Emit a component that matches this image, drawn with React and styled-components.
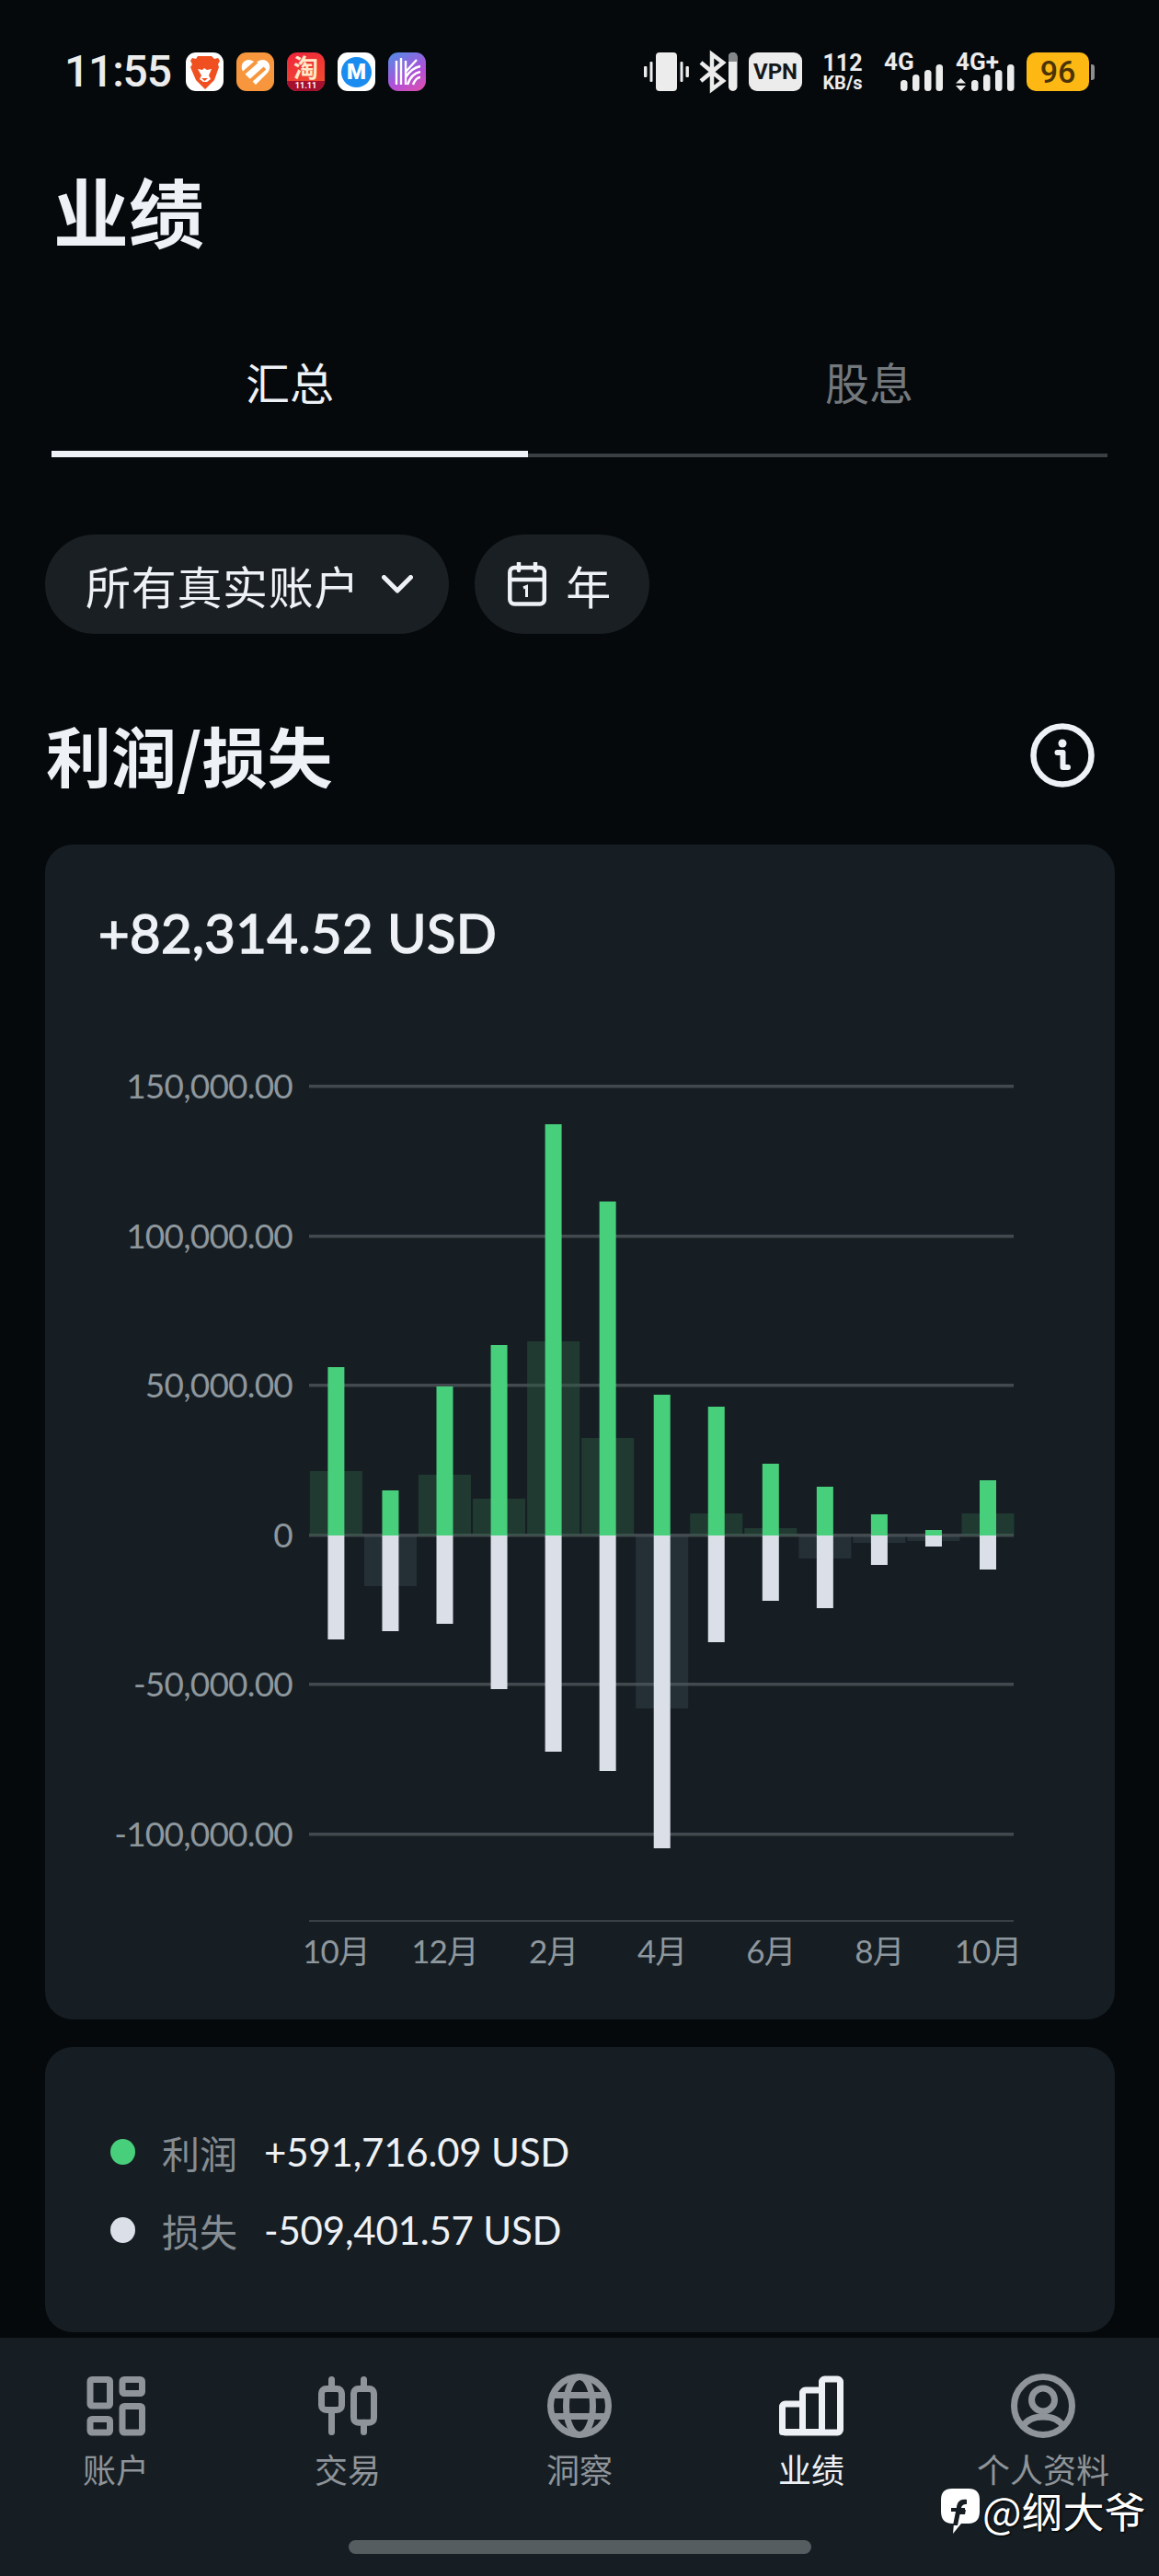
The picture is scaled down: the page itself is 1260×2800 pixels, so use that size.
import React from "react";
import styled, { createGlobalStyle } from "styled-components";

const GlobalStyle = createGlobalStyle`
  html, body {
    margin: 0;
    padding: 0;
    background: #05090c;
  }
  body {
    font-family: Lato, "Noto Sans CJK SC", sans-serif;
  }
  * {
    box-sizing: border-box;
  }
`;

const cjk = `"Noto Sans CJK SC", sans-serif`;

const Page = styled.div`
  position: relative;
  width: 1260px;
  height: 2800px;
  background: #05090c;
  color: #eef1f5;
  display: flex;
  flex-direction: column;
  overflow: hidden;
`;

/* status bar */
const StatusBar = styled.div`
  display: flex;
  justify-content: space-between;
  align-items: center;
  height: 42px;
  margin-top: 57px;
  padding: 0 70px 0 70px;
  color: #ececec;
`;
const StatusLeft = styled.div`
  display: flex;
  align-items: center;
`;
const Clock = styled.div`
  font-family: Roboto, sans-serif;
  font-size: 48px;
  font-weight: 500;
  line-height: 42px;
  width: 132px;
  letter-spacing: -1.2px;
`;
const AppIcons = styled.div`
  display: flex;
  gap: 14px;
`;
const AppIcon = styled.div`
  width: 41px;
  height: 42px;
  border-radius: 11px;
  background: ${(p) => p.$bg || "#fff"};
  display: flex;
  flex-direction: column;
  align-items: center;
  justify-content: center;
  svg {
    display: block;
  }
`;
const TaoGlyph = styled.span`
  font-family: ${cjk};
  font-size: 27px;
  font-weight: 700;
  line-height: 31px;
  color: #ffe9c9;
`;
const TaoStrip = styled.span`
  width: 100%;
  height: 11px;
  border-radius: 0 0 11px 11px;
  background: #a5102f;
  color: #fff;
  font-family: Roboto, sans-serif;
  font-size: 9px;
  font-weight: 700;
  line-height: 11px;
  text-align: center;
`;
const MarkM = styled.span`
  width: 33px;
  height: 33px;
  border-radius: 50%;
  background: #1a8cf0;
  color: #fff;
  font-family: Roboto, sans-serif;
  font-size: 24px;
  font-weight: 900;
  line-height: 33px;
  text-align: center;
`;
const StatusRight = styled.div`
  display: flex;
  align-items: center;
  svg {
    display: block;
    overflow: visible;
  }
`;
const Vpn = styled.div`
  width: 58px;
  height: 42px;
  margin: 0 19px 0 12px;
  border-radius: 9px;
  background: #ececec;
  color: #15181a;
  font-family: Roboto, sans-serif;
  font-size: 24px;
  font-weight: 700;
  line-height: 42px;
  text-align: center;
`;
const Speed = styled.div`
  width: 50px;
  margin-right: 20px;
  font-family: Roboto, sans-serif;
  font-weight: 700;
  text-align: center;
  white-space: nowrap;
  span {
    display: block;
    font-size: 25px;
    line-height: 24px;
  }
  small {
    display: block;
    font-size: 20px;
    line-height: 18px;
  }
`;
const SignalText = styled.text`
  font-family: Roboto, sans-serif;
  font-size: 26px;
  font-weight: 700;
  fill: #ececec;
`;
const Battery = styled.div`
  display: flex;
  align-items: center;
  gap: 2px;
  margin-left: 13px;
`;
const BatteryBody = styled.div`
  width: 68px;
  height: 42px;
  border-radius: 10px;
  background: #fdb813;
  color: #4a3305;
  font-family: Roboto, sans-serif;
  font-size: 34px;
  font-weight: 500;
  line-height: 42px;
  text-align: center;
`;
const BatteryTip = styled.div`
  width: 4px;
  height: 17px;
  border-radius: 0 3px 3px 0;
  background: #8d8d8d;
`;

/* header */
const Title = styled.h1`
  margin: 79px 0 0 58px;
  font-family: ${cjk};
  font-size: 82px;
  font-weight: 700;
  line-height: 100px;
  color: #eef1f5;
`;
const TabLabels = styled.div`
  display: grid;
  grid-template-columns: 1fr 1fr;
  margin-top: 106px;
`;
const TabLabel = styled.div`
  font-family: ${cjk};
  font-size: 48px;
  line-height: 60px;
  text-align: center;
  color: ${(p) => (p.$active ? "#eef1f5" : "#73787c")};
`;
const TabTrack = styled.div`
  display: flex;
  align-items: flex-end;
  margin: 46px 56px 0;
  height: 7px;
`;
const TabActiveBar = styled.div`
  width: 518px;
  height: 7px;
  background: #eef1f5;
`;
const TabRestBar = styled.div`
  flex: 1;
  height: 4px;
  background: #3a3f43;
`;
const Filters = styled.div`
  display: flex;
  gap: 28px;
  margin: 84px 0 0 49px;
`;
const Pill = styled.div`
  display: flex;
  align-items: center;
  height: 108px;
  padding: 0 ${(p) => p.$right}px 0 ${(p) => p.$left}px;
  gap: ${(p) => p.$gap}px;
  border-radius: 54px;
  background: #1a1f23;
  font-family: ${cjk};
  font-size: 49px;
  color: #eef1f5;
  letter-spacing: 0.7px;
`;
const SectionHead = styled.div`
  display: flex;
  justify-content: space-between;
  align-items: center;
  margin: 87px 70px 0 50px;
  height: 90px;
`;
const SectionTitle = styled.h2`
  margin: -5px 0 0;
  font-family: ${cjk};
  font-size: 71px;
  font-weight: 700;
  line-height: 90px;
  color: #eef1f5;
`;

/* cards */
const ChartCard = styled.div`
  margin: 52px 48px 0 49px;
  height: 1277px;
  padding-top: 61px;
  border-radius: 30px;
  background: #161e23;
`;
const Total = styled.div`
  margin-left: 58px;
  font-size: 58px;
  font-weight: 400;
  line-height: 70px;
  letter-spacing: 0.3px;
  -webkit-text-stroke: 1.5px #eef1f5;
  color: #eef1f5;
`;
const ChartSvg = styled.svg`
  display: block;
  margin-top: 101px;
`;
const AxisText = styled.text`
  font-family: Lato, "Noto Sans CJK SC", sans-serif;
  font-size: ${(p) => p.$size}px;
  letter-spacing: ${(p) => p.$track}px;
  fill: #8e979d;
  text-anchor: ${(p) => p.$anchor};
`;
const LegendCard = styled.div`
  display: flex;
  flex-direction: column;
  gap: 37px;
  margin: 30px 48px 0 49px;
  height: 310px;
  padding: 90px 0 0 71px;
  border-radius: 30px;
  background: #161e23;
`;
const LegendRow = styled.div`
  display: flex;
  align-items: center;
  height: 48px;
`;
const LegendDot = styled.span`
  width: 27px;
  height: 28px;
  border-radius: 50%;
  background: ${(p) => p.$color};
`;
const LegendLabel = styled.span`
  margin: 0 29px 0 29px;
  font-family: ${cjk};
  font-size: 41px;
  color: #868d92;
`;
const LegendValue = styled.span`
  font-size: 42px;
  line-height: 48px;
  letter-spacing: -0.2px;
  color: #eef1f5;
`;

/* bottom nav */
const NavBar = styled.div`
  position: relative;
  display: flex;
  flex-direction: column;
  align-items: center;
  margin-top: auto;
  height: 259px;
  padding-top: 39px;
  background: #161e23;
`;
const NavItems = styled.div`
  display: grid;
  grid-template-columns: repeat(5, 252px);
`;
const NavItem = styled.div`
  display: flex;
  flex-direction: column;
  align-items: center;
  gap: 13px;
  color: ${(p) => (p.$active ? "#edf0f4" : "#8e9499")};
  svg {
    display: block;
  }
`;
const NavLabel = styled.span`
  font-family: ${cjk};
  font-size: 36px;
  line-height: 40px;
  white-space: nowrap;
`;
const HomeIndicator = styled.div`
  width: 503px;
  height: 15px;
  margin-top: 58px;
  border-radius: 8px;
  background: #565d61;
`;
const Watermark = styled.div`
  position: absolute;
  left: 1023px;
  top: 160px;
  display: flex;
  align-items: center;
  gap: 3px;
  font-family: ${cjk};
  font-size: 45px;
  line-height: 56px;
  color: #fff;
  white-space: nowrap;
  text-shadow: 0 0 2px #000, 1px 1px 2px #000;
`;

/* chart data: heights in px above and below the zero line */
const SCALE_TOP = 31;
const STEP = 162.6;
const ZERO = 519;
const gridValues = ["150,000.00", "100,000.00", "50,000.00", "0", "-50,000.00", "-100,000.00"];
const months = ["10月", "12月", "2月", "4月", "6月", "8月", "10月"];
const bars = [
  { up: 183, down: 113, net: 70 },
  { up: 49, down: 104, net: -55 },
  { up: 162, down: 96, net: 66 },
  { up: 207, down: 167, net: 40 },
  { up: 447, down: 235, net: 211 },
  { up: 363, down: 256, net: 106 },
  { up: 153, down: 340, net: -188 },
  { up: 140, down: 116, net: 24 },
  { up: 78, down: 71, net: 8 },
  { up: 53, down: 79, net: -25 },
  { up: 23, down: 32, net: -8 },
  { up: 6, down: 12, net: -6 },
  { up: 60, down: 37, net: 24 },
];
const barX = (i) => 316.4 + i * 59.05;
const gridY = (i) => Math.round(SCALE_TOP + i * STEP);

const Chart = () => (
  <ChartSvg width="1163" height="1000" viewBox="0 0 1163 1000">
    {gridValues.map((label, i) => (
      <g key={label}>
        <rect x="287" y={gridY(i) - 2} width="766" height="3.500" fill="#434a4f" />
        <AxisText $anchor="end" $size={37} $track={-0.8} x="269" y={gridY(i) + 13}>
          {label}
        </AxisText>
      </g>
    ))}
    <rect x="287" y="937" width="766" height="2" fill="#383f45" />
    {bars.map((b, i) =>
      b.net > 0 ? (
        <rect key={i} x={barX(i) - 28.5} y={ZERO - b.net} width="57" height={b.net} fill="#2f5f46" opacity="0.42" />
      ) : (
        <rect key={i} x={barX(i) - 28.5} y={ZERO} width="57" height={-b.net} fill="#4a5a62" opacity="0.3" />
      )
    )}
    {bars.map((b, i) => (
      <g key={i}>
        <rect x={barX(i) - 9} y={ZERO - b.up} width="18" height={b.up} fill="#48cf7c" />
        <rect x={barX(i) - 9} y={ZERO} width="18" height={b.down} fill="#dbdfe8" />
      </g>
    ))}
    {months.map((m, i) => (
      <AxisText key={i} $anchor="middle" $size={35} $track={-1} x={barX(i * 2)} y="984">
        {m}
      </AxisText>
    ))}
  </ChartSvg>
);

/* icons */
const BraveIcon = () => (
  <svg width="33" height="37" viewBox="0 0 33 37">
    <path d="M9 1h15l3 3 4-1 2 3-2 4 1 3-5 14-10 10L7 27 1 13l2-3-2-4 2-3 4 1z" fill="#f0501f" />
    <path d="M9 15l5 1 2-2 3 2 5-1-3 7 2 4-4 3h-4l-4-3 2-4z" fill="#fff" />
    <path d="M13 25h7l-3.500 3z" fill="#f0501f" />
  </svg>
);
const HeartIcon = () => (
  <svg width="32" height="29" viewBox="0 0 32 29">
    <path d="M16 28L3 15C-2 9 2 1 8 1c3 0 6 1 8 4 2-3 5-4 8-4 6 0 10 8 5 14z" fill="#fff" />
    <path d="M1 17L17 3M8 26L26 10" stroke="#f7963c" strokeWidth="4" />
  </svg>
);
const LinesIcon = () => (
  <svg width="41" height="42" viewBox="0 0 41 42">
    <g fill="none" stroke="#fff" strokeWidth="2.400">
      <path d="M9 9v26M14 6v29M19 9v26" />
      <path d="M19 21L31 8M19 27C24 19 30 16 35 15M21 35c3-9 9-13 14-14M27 35c2-5 5-8 8-8" />
    </g>
  </svg>
);
const VibrateIcon = () => (
  <svg width="49" height="42" viewBox="0 0 49 42" fill="currentColor">
    <rect x="13" width="23" height="42" rx="4" />
    <rect x="0" y="15" width="3.400" height="12" rx="1" />
    <rect x="6.500" y="10" width="3" height="22" rx="1" />
    <rect x="39.500" y="10" width="3" height="22" rx="1" />
    <rect x="45.500" y="15" width="3.400" height="12" rx="1" />
  </svg>
);
const BluetoothIcon = () => (
  <svg width="42" height="42" viewBox="0 0 42 42" style={{ marginLeft: 11 }}>
    <path d="M2 11l24 20-12 9V2l12 9L2 31" fill="none" stroke="#ececec" strokeWidth="4.500" />
    <rect x="32" width="9.500" height="42" rx="4.700" fill="#ececec" />
    <path d="M32 10V4.700a4.700 4.700 0 0 1 9.500 0V10z" fill="#85888a" />
  </svg>
);
const signalBar = (x, h) => <rect key={x} x={x} y={42 - h} width="7.500" height={h} rx="3.500" fill="#ececec" />;
const Signal4G = () => (
  <svg width="64" height="42" viewBox="0 0 64 42" style={{ marginRight: 14 }}>
    <SignalText x="0" y="19">4G</SignalText>
    {[[18, 12], [31, 18], [44, 23], [56.500, 29]].map(([x, h]) => signalBar(x, h))}
  </svg>
);
const Signal4GPlus = () => (
  <svg width="64" height="42" viewBox="0 0 64 42">
    <SignalText x="0" y="19">4G+</SignalText>
    <path d="M0 33.500L5.500 28l5.500 5.500zM0 36l5.500 6 5.500-6z" fill="#ececec" />
    {[[17, 12], [30, 18], [43, 23], [56, 29]].map(([x, h]) => signalBar(x, h))}
  </svg>
);
const ChevronIcon = () => (
  <svg width="34" height="20" viewBox="0 0 34 20">
    <path d="M2.500 2.500L17 17 31.500 2.500" fill="none" stroke="#eef1f5" strokeWidth="5" strokeLinecap="round" strokeLinejoin="round" />
  </svg>
);
const CalendarIcon = () => (
  <svg width="42" height="48" viewBox="0 0 42 48" fill="none" stroke="#eef1f5" strokeWidth="4.500">
    <rect x="2.300" y="6" width="37.500" height="39.500" rx="5" />
    <path d="M2.300 19h37.500M12 1v8M30 1v8" strokeLinecap="round" />
    <path d="M17 28l3.500-1.500V38" strokeWidth="3" />
  </svg>
);
const InfoIcon = () => (
  <svg width="70" height="70" viewBox="0 0 70 70">
    <circle cx="35" cy="35" r="31.500" fill="none" stroke="#eef1f5" strokeWidth="6.500" />
    <circle cx="35" cy="22" r="4.500" fill="#eef1f5" />
    <path d="M29.500 32H35.500V48H41" fill="none" stroke="#eef1f5" strokeWidth="6" strokeLinejoin="round" strokeLinecap="round" />
  </svg>
);
const NavIconSvg = styled.svg`
  width: 70px;
  height: 70px;
  fill: none;
  stroke: currentColor;
  stroke-width: 7px;
`;
const AccountsIcon = () => (
  <NavIconSvg viewBox="0 0 70 70">
    <rect x="7" y="6.500" width="21.500" height="28.500" rx="2" />
    <rect x="42" y="6.500" width="21.500" height="15" rx="2" />
    <rect x="7" y="49.500" width="21.500" height="14.500" rx="2" />
    <rect x="42" y="35.500" width="21.500" height="28.500" rx="2" />
  </NavIconSvg>
);
const TradeIcon = () => (
  <NavIconSvg viewBox="0 0 70 70" strokeLinecap="round">
    <rect x="6.500" y="16.500" width="22" height="23" rx="5" />
    <rect x="41.500" y="16.500" width="22" height="36.700" rx="5" />
    <path d="M17.500 6.500V16.500M17.500 39.500V63.500M52.500 6.500V16.500M52.500 53.200V63.500" />
  </NavIconSvg>
);
const GlobeIcon = () => (
  <NavIconSvg viewBox="0 0 70 70">
    <circle cx="35" cy="35" r="31.500" />
    <ellipse cx="35" cy="35" rx="14.500" ry="31.500" />
    <path d="M6 23.500H64M6 46.500H64" />
  </NavIconSvg>
);
const ChartIcon = () => (
  <NavIconSvg viewBox="0 0 70 70" strokeLinejoin="round">
    <path d="M3.500 63.500V36a3 3 0 0 1 3-3h19V63.500zM25.500 63.500V21a3 3 0 0 1 3-3h18V63.500z" />
    <path d="M46.500 63.500V9a3 3 0 0 1 3-3h14a3 3 0 0 1 3 3V61a3 3 0 0 1-3 3H6.500a3 3 0 0 1-3-3" />
  </NavIconSvg>
);
const ProfileIcon = () => (
  <NavIconSvg viewBox="0 0 70 70">
    <circle cx="35" cy="35" r="31.500" />
    <circle cx="35" cy="28.500" r="12.500" />
    <path d="M13 58c4-8 12-11 22-11s18 3 22 11" />
  </NavIconSvg>
);
const FacebookMark = () => (
  <svg width="42" height="49" viewBox="0 0 42 49">
    <path d="M12 0h18c8 0 12 4 12 12v13c0 8-4 13-12 13h-8l-9 11 1-11h-2C4 38 0 33 0 25V12C0 4 4 0 12 0z" fill="#fff" />
    <path d="M13 40l4-20c1-6 4-9 11-8v5c-4 0-5 1-6 4l-.500 2H27l-1 5h-5.500l-2.500 12z" fill="#161e23" />
    <path d="M11 21h15v4H11z" fill="#161e23" />
  </svg>
);

const navItems = [
  { label: "账户", Icon: AccountsIcon },
  { label: "交易", Icon: TradeIcon },
  { label: "洞察", Icon: GlobeIcon },
  { label: "业绩", Icon: ChartIcon, active: true },
  { label: "个人资料", Icon: ProfileIcon },
];

const App = () => (
  <Page>
    <GlobalStyle />
    <StatusBar>
      <StatusLeft>
        <Clock>11:55</Clock>
        <AppIcons>
          <AppIcon><BraveIcon /></AppIcon>
          <AppIcon $bg="#f7963c"><HeartIcon /></AppIcon>
          <AppIcon $bg="linear-gradient(160deg, #f0243c, #f0552c)">
            <TaoGlyph>淘</TaoGlyph>
            <TaoStrip>11.11</TaoStrip>
          </AppIcon>
          <AppIcon><MarkM>M</MarkM></AppIcon>
          <AppIcon $bg="linear-gradient(150deg, #4f8fe8, #b04fd8 60%, #e14fa8)"><LinesIcon /></AppIcon>
        </AppIcons>
      </StatusLeft>
      <StatusRight>
        <VibrateIcon />
        <BluetoothIcon />
        <Vpn>VPN</Vpn>
        <Speed>
          <span>112</span>
          <small>KB/s</small>
        </Speed>
        <Signal4G />
        <Signal4GPlus />
        <Battery>
          <BatteryBody>96</BatteryBody>
          <BatteryTip />
        </Battery>
      </StatusRight>
    </StatusBar>

    <Title>业绩</Title>
    <TabLabels>
      <TabLabel $active>汇总</TabLabel>
      <TabLabel>股息</TabLabel>
    </TabLabels>
    <TabTrack>
      <TabActiveBar />
      <TabRestBar />
    </TabTrack>

    <Filters>
      <Pill $left={44} $right={39} $gap={24}>
        所有真实账户
        <ChevronIcon />
      </Pill>
      <Pill $left={36} $right={41} $gap={21}>
        <CalendarIcon />
        年
      </Pill>
    </Filters>

    <SectionHead>
      <SectionTitle>利润/损失</SectionTitle>
      <InfoIcon />
    </SectionHead>

    <ChartCard>
      <Total>+82,314.52 USD</Total>
      <Chart />
    </ChartCard>

    <LegendCard>
      <LegendRow>
        <LegendDot $color="#48cf7c" />
        <LegendLabel>利润</LegendLabel>
        <LegendValue>+591,716.09 USD</LegendValue>
      </LegendRow>
      <LegendRow>
        <LegendDot $color="#dbdfe8" />
        <LegendLabel>损失</LegendLabel>
        <LegendValue>-509,401.57 USD</LegendValue>
      </LegendRow>
    </LegendCard>

    <NavBar>
      <NavItems>
        {navItems.map(({ label, Icon, active }) => (
          <NavItem key={label} $active={active}>
            <Icon />
            <NavLabel>{label}</NavLabel>
          </NavItem>
        ))}
      </NavItems>
      <HomeIndicator />
      <Watermark>
        <FacebookMark />
        @纲大爷
      </Watermark>
    </NavBar>
  </Page>
);

export default App;
